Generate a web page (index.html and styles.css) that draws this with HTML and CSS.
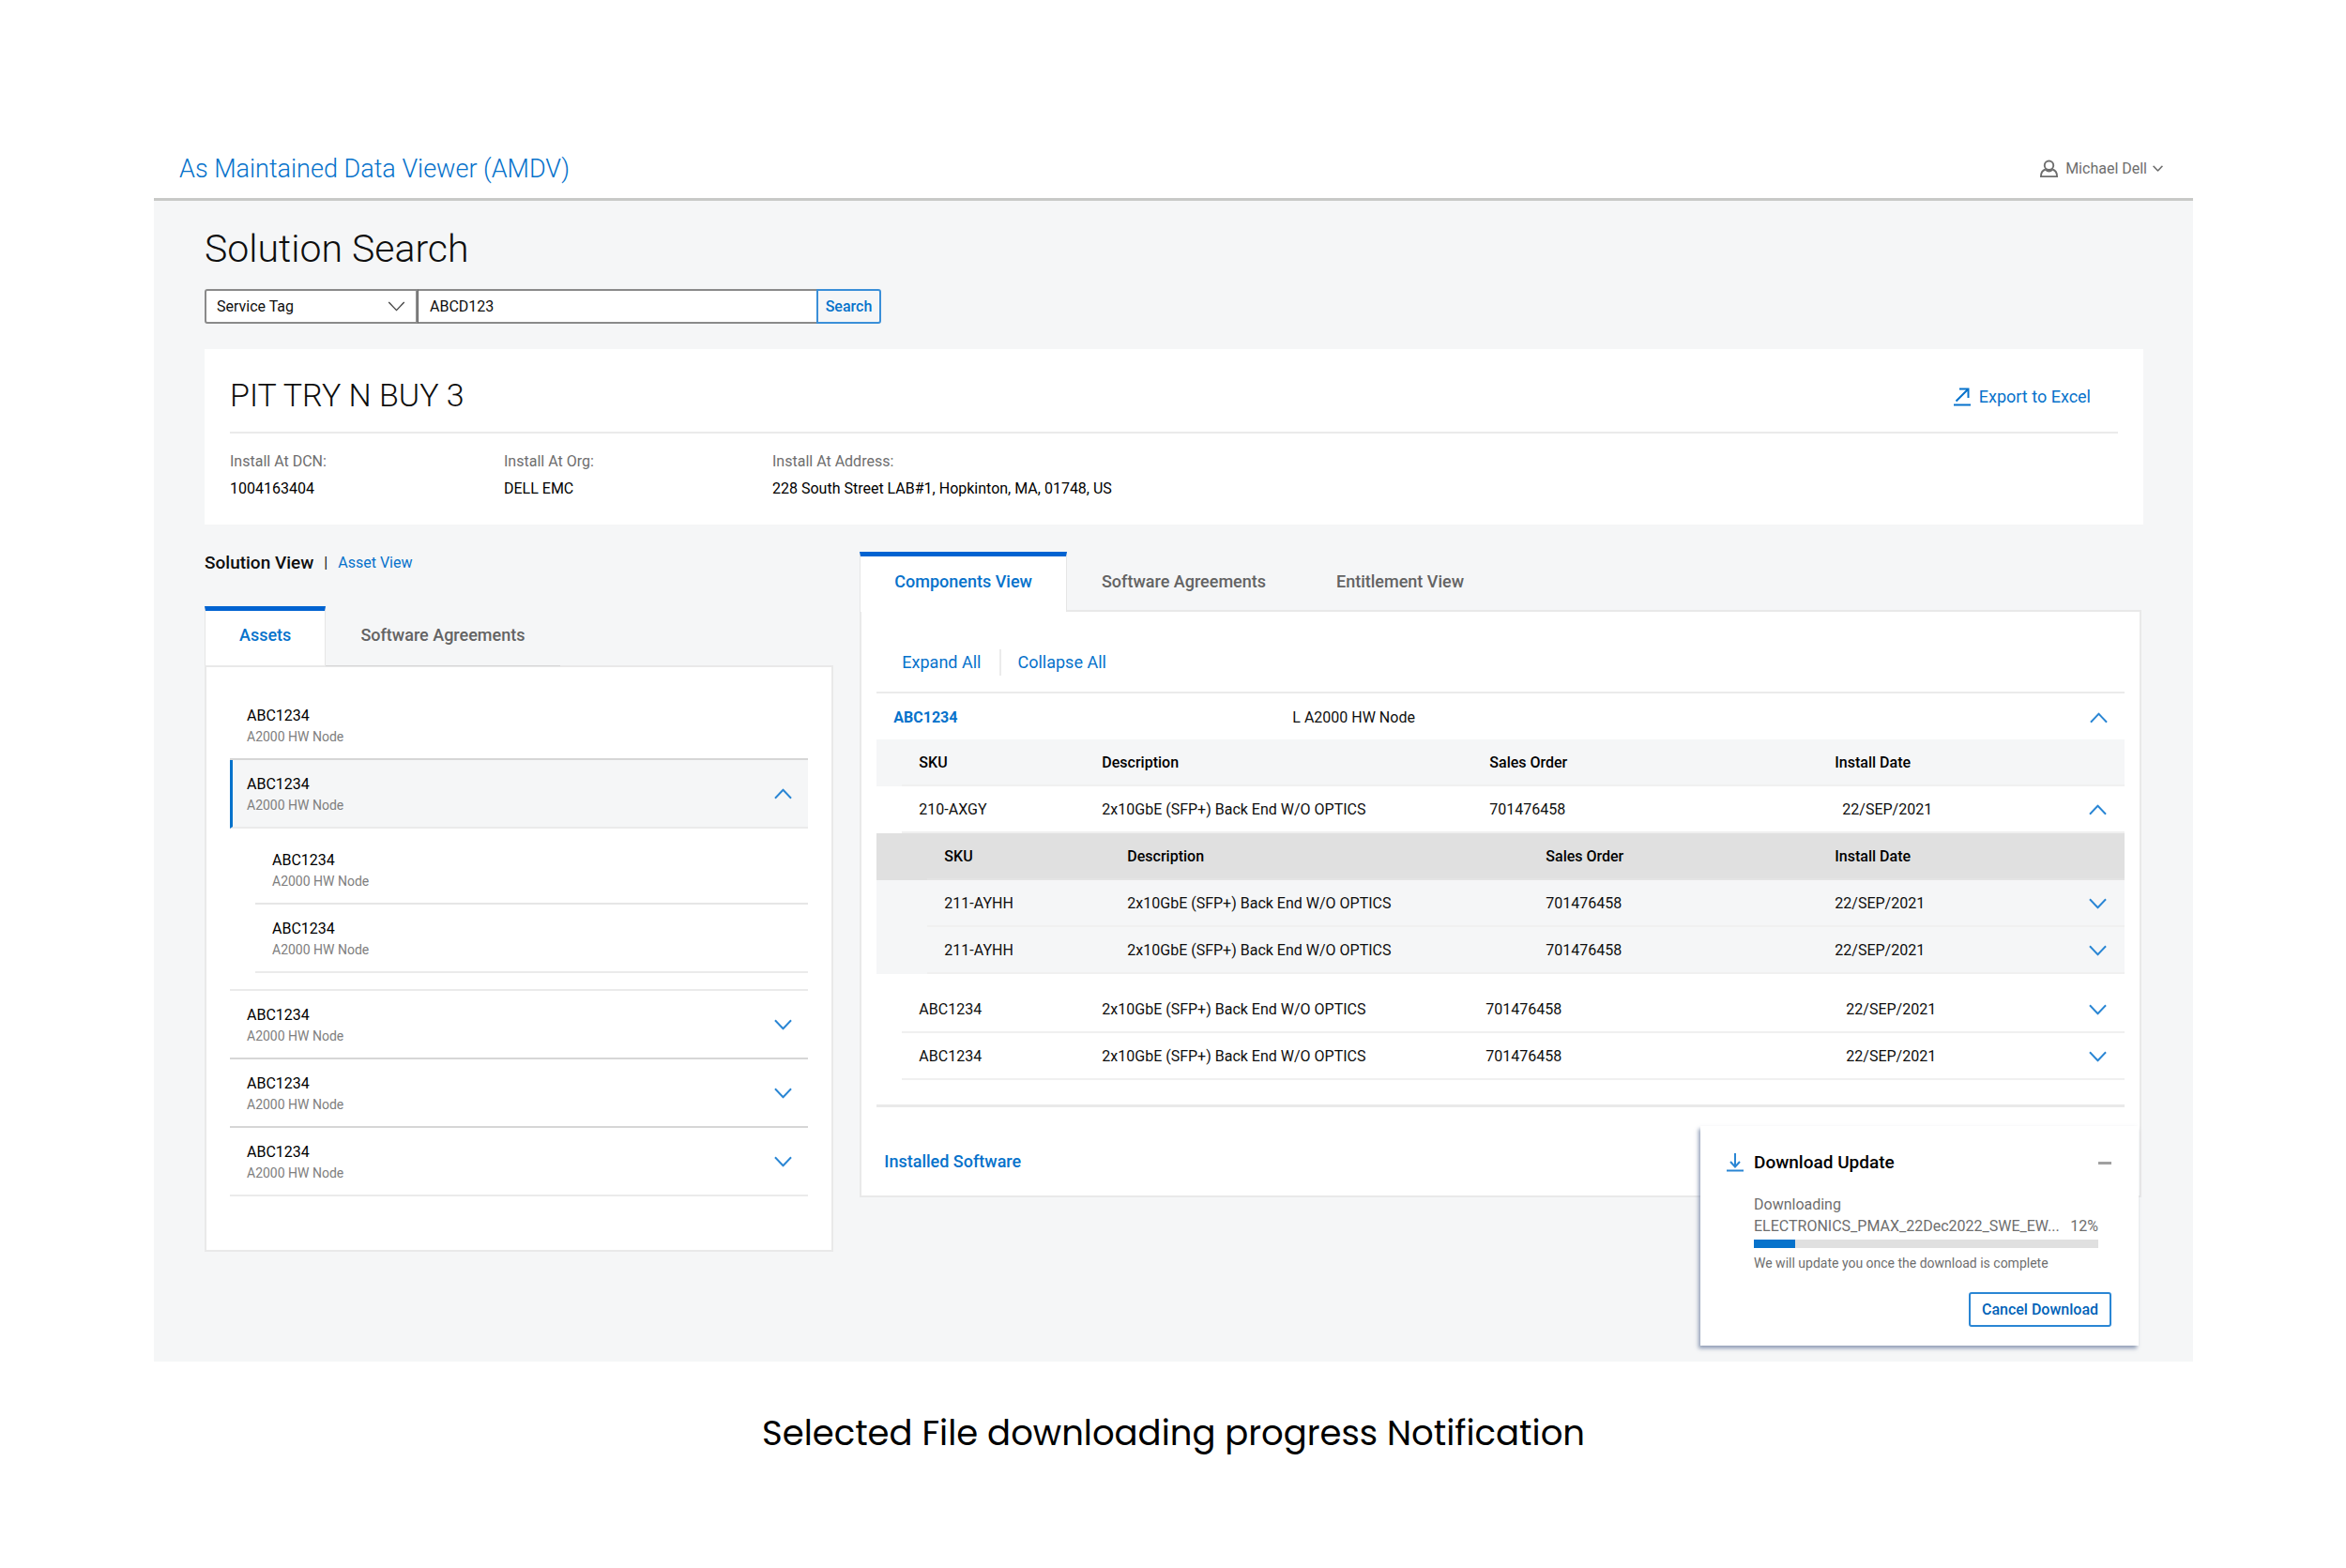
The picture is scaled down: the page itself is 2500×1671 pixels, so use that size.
FILE: index.html
```html
<!DOCTYPE html>
<html lang="en">
<head>
    <meta charset="UTF-8">
    <meta name="viewport" content="width=device-width, initial-scale=1.0">
    <title>As Maintained Data Viewer (AMDV)</title>
    <link rel="stylesheet" href="styles.css">
</head>
<body>
    <!-- Shared icons -->
    <svg class="icon-defs" aria-hidden="true">
        <symbol id="icon-down" viewBox="0 0 20 12"><path d="M1 1l9 9.5L19 1"/></symbol>
        <symbol id="icon-up" viewBox="0 0 20 12"><path d="M1 11l9-9.5L19 11"/></symbol>
    </svg>

    <div class="app">
        <header class="topbar">
            <a class="brand" href="#">As Maintained Data Viewer (AMDV)</a>
            <button class="user-menu" type="button">
                <svg class="icon-user" viewBox="0 0 20 20" aria-hidden="true">
                    <circle cx="10" cy="6" r="5"/>
                    <path d="M6 10.5C3 11.5 1 14.5 1 18.5h18c0-4-2-7-5-8M6 10.5c2.5 2.5 5.5 2.500 8 0"/>
                </svg>
                Michael Dell
                <svg class="icon-caret" viewBox="0 0 20 12" aria-hidden="true"><use href="#icon-down"/></svg>
            </button>
        </header>

        <main class="content">
            <h1>Solution Search</h1>
            <form class="search">
                <div class="search-type">
                    <select aria-label="Search by">
                        <option>Service Tag</option>
                    </select>
                    <svg class="select-arrow" viewBox="0 0 20 12" aria-hidden="true"><use href="#icon-down"/></svg>
                </div>
                <input class="search-text" type="text" value="ABCD123" aria-label="Search text">
                <button class="search-button" type="button">Search</button>
            </form>

            <section class="summary">
                <div class="summary-head">
                    <h2>PIT TRY N BUY 3</h2>
                    <a class="export" href="#">
                        <svg viewBox="0 0 18 20" aria-hidden="true"><path d="M2.500 14.500L15.500 1.500M6 1.500h9.500V11M0 18.500h18"/></svg>
                        Export to Excel
                    </a>
                </div>
                <dl class="summary-details">
                    <div><dt>Install At DCN:</dt><dd>1004163404</dd></div>
                    <div><dt>Install At Org:</dt><dd>DELL EMC</dd></div>
                    <div><dt>Install At Address:</dt><dd>228 South Street LAB#1, Hopkinton, MA, 01748, US</dd></div>
                </dl>
            </section>

            <div class="columns">
                <section>
                    <div class="view-switch">
                        <strong>Solution View</strong>
                        <span>|</span>
                        <a href="#">Asset View</a>
                    </div>
                    <div class="tabs">
                        <button class="tab active" type="button">Assets</button>
                        <button class="tab underlined" type="button">Software Agreements</button>
                    </div>
                    <div class="panel asset-panel">
                        <div class="asset">
                            <div class="asset-text"><b>ABC1234</b><small>A2000 HW Node</small></div>
                        </div>
                        <div class="asset selected">
                            <div class="asset-text"><b>ABC1234</b><small>A2000 HW Node</small></div>
                            <button class="toggle" type="button" aria-label="Collapse"><svg viewBox="0 0 20 12"><use href="#icon-up"/></svg></button>
                        </div>
                        <div class="asset-children">
                            <div class="asset">
                                <div class="asset-text"><b>ABC1234</b><small>A2000 HW Node</small></div>
                            </div>
                            <div class="asset">
                                <div class="asset-text"><b>ABC1234</b><small>A2000 HW Node</small></div>
                            </div>
                        </div>
                        <div class="asset">
                            <div class="asset-text"><b>ABC1234</b><small>A2000 HW Node</small></div>
                            <button class="toggle" type="button" aria-label="Expand"><svg viewBox="0 0 20 12"><use href="#icon-down"/></svg></button>
                        </div>
                        <div class="asset">
                            <div class="asset-text"><b>ABC1234</b><small>A2000 HW Node</small></div>
                            <button class="toggle" type="button" aria-label="Expand"><svg viewBox="0 0 20 12"><use href="#icon-down"/></svg></button>
                        </div>
                        <div class="asset">
                            <div class="asset-text"><b>ABC1234</b><small>A2000 HW Node</small></div>
                            <button class="toggle" type="button" aria-label="Expand"><svg viewBox="0 0 20 12"><use href="#icon-down"/></svg></button>
                        </div>
                    </div>
                </section>

                <section>
                    <div class="tabs joined">
                        <button class="tab active" type="button">Components View</button>
                        <button class="tab" type="button">Software Agreements</button>
                        <button class="tab" type="button">Entitlement View</button>
                    </div>
                    <div class="panel component-panel">
                        <div class="expand-links">
                            <a href="#">Expand All</a>
                            <a href="#">Collapse All</a>
                        </div>
                        <div class="component-head">
                            <a href="#">ABC1234</a>
                            <span>L A2000 HW Node</span>
                            <button class="toggle" type="button" aria-label="Collapse"><svg viewBox="0 0 20 12"><use href="#icon-up"/></svg></button>
                        </div>

                        <table class="parts">
                            <colgroup><col class="gutter"><col class="sku"><col class="description"><col class="order"><col><col class="action"></colgroup>
                            <thead>
                                <tr><td></td><th>SKU</th><th>Description</th><th>Sales Order</th><th>Install Date</th><td></td></tr>
                            </thead>
                            <tbody>
                                <tr>
                                    <td></td><td>210-AXGY</td><td>2x10GbE (SFP+) Back End W/O OPTICS</td><td>701476458</td><td class="date">22/SEP/2021</td>
                                    <td><button class="toggle" type="button" aria-label="Collapse"><svg viewBox="0 0 20 12"><use href="#icon-up"/></svg></button></td>
                                </tr>
                            </tbody>
                        </table>

                        <table class="parts nested">
                            <colgroup><col class="gutter"><col class="sku"><col class="description"><col class="order"><col><col class="action"></colgroup>
                            <thead>
                                <tr><td></td><th>SKU</th><th>Description</th><th>Sales Order</th><th>Install Date</th><td></td></tr>
                            </thead>
                            <tbody>
                                <tr>
                                    <td></td><td>211-AYHH</td><td>2x10GbE (SFP+) Back End W/O OPTICS</td><td>701476458</td><td>22/SEP/2021</td>
                                    <td><button class="toggle" type="button" aria-label="Expand"><svg viewBox="0 0 20 12"><use href="#icon-down"/></svg></button></td>
                                </tr>
                                <tr>
                                    <td></td><td>211-AYHH</td><td>2x10GbE (SFP+) Back End W/O OPTICS</td><td>701476458</td><td>22/SEP/2021</td>
                                    <td><button class="toggle" type="button" aria-label="Expand"><svg viewBox="0 0 20 12"><use href="#icon-down"/></svg></button></td>
                                </tr>
                            </tbody>
                        </table>

                        <table class="parts more">
                            <colgroup><col class="gutter"><col class="sku"><col class="description"><col class="order"><col><col class="action"></colgroup>
                            <tbody>
                                <tr>
                                    <td></td><td>ABC1234</td><td>2x10GbE (SFP+) Back End W/O OPTICS</td><td>701476458</td><td>22/SEP/2021</td>
                                    <td><button class="toggle" type="button" aria-label="Expand"><svg viewBox="0 0 20 12"><use href="#icon-down"/></svg></button></td>
                                </tr>
                                <tr>
                                    <td></td><td>ABC1234</td><td>2x10GbE (SFP+) Back End W/O OPTICS</td><td>701476458</td><td>22/SEP/2021</td>
                                    <td><button class="toggle" type="button" aria-label="Expand"><svg viewBox="0 0 20 12"><use href="#icon-down"/></svg></button></td>
                                </tr>
                            </tbody>
                        </table>

                        <div class="installed">
                            <a href="#">Installed Software</a>
                        </div>
                    </div>
                </section>
            </div>

            <aside class="download">
                <div class="download-head">
                    <svg class="icon-download" viewBox="0 0 18 20" aria-hidden="true"><path d="M9 0v14M4 9l5 5.500L14 9M0 18.500h18"/></svg>
                    <h3>Download Update</h3>
                    <button class="minimize" type="button" aria-label="Minimize"></button>
                </div>
                <div class="download-body">
                    <div>Downloading</div>
                    <div class="download-file">
                        <label for="download-progress">ELECTRONICS_PMAX_22Dec2022_SWE_EW...</label>
                        <span>12%</span>
                    </div>
                    <progress id="download-progress" value="12" max="100"></progress>
                    <p>We will update you once the download is complete</p>
                </div>
                <button class="cancel" type="button">Cancel Download</button>
            </aside>
        </main>
    </div>

    <p class="caption">Selected File downloading progress Notification</p>
</body>
</html>
```

FILE: styles.css
```css
* {
    box-sizing: border-box;
}
body {
    margin: 0;
    padding: 148px 163px 0 164px;
    background: #fff;
    color: #0e0e0e;
    font-family: Roboto, sans-serif;
    font-size: 16px;
    line-height: 24px;
}
h1, h2, h3, p, dl, dd {
    margin: 0;
}
a {
    color: #0672cb;
    text-decoration: none;
}
button, input, select {
    font: inherit;
    color: inherit;
    margin: 0;
}
button {
    padding: 0;
    border: 0;
    background: none;
    cursor: pointer;
}
svg {
    display: block;
    fill: none;
    stroke: currentColor;
    stroke-width: 2;
}
.icon-defs {
    position: absolute;
    width: 0;
    height: 0;
}

/* Top bar */
.topbar {
    display: flex;
    align-items: center;
    justify-content: space-between;
    height: 66px;
    padding: 0 32px 0 27px;
    border-bottom: 3px solid #c8c9c7;
}
.brand {
    font-size: 27px;
    font-weight: 300;
    line-height: 36px;
}
.user-menu {
    display: flex;
    align-items: center;
    color: #6e6e6e;
}
.icon-user {
    width: 19px;
    height: 20px;
    margin-right: 8px;
}
.icon-caret {
    width: 11px;
    height: 7px;
    margin-left: 6px;
    stroke-width: 3;
}

/* Page content */
.content {
    position: relative;
    padding: 27px 53px 117px 54px;
    background: #f5f6f7;
}
h1 {
    font-size: 41px;
    font-weight: 300;
    line-height: 48px;
}
.search {
    display: flex;
    height: 37px;
    margin-top: 19px;
}
.search-type {
    position: relative;
    width: 227px;
}
.search-type select {
    width: 100%;
    height: 100%;
    padding: 0 11px;
    border: 2px solid #8a8a8a;
    border-radius: 3px 0 0 3px;
    background: #fff;
    appearance: none;
}
.select-arrow {
    position: absolute;
    top: 13px;
    right: 13px;
    width: 19px;
    height: 11px;
    color: #444;
    stroke-width: 1.5;
    pointer-events: none;
}
.search-text {
    width: 425px;
    padding: 0 12px;
    border: 2px solid #8a8a8a;
    border-left: 1px solid #636363;
    border-right: 0;
    background: #fff;
}
.search-button {
    width: 69px;
    border: 2px solid #3a8fd8;
    border-radius: 0 3px 3px 0;
    color: #0672cb;
    font-weight: 500;
}

/* Solution summary */
.summary {
    margin-top: 27px;
    padding: 29px 27px 26px;
    background: #fff;
}
.summary-head {
    display: flex;
    align-items: center;
    justify-content: space-between;
    padding: 0 29px 19px 0;
    border-bottom: 2px solid #ebebeb;
}
h2 {
    font-size: 34px;
    font-weight: 300;
    line-height: 40px;
}
.export {
    display: flex;
    align-items: center;
    gap: 9px;
    padding-top: 4px;
    font-size: 18px;
}
.export svg {
    width: 18px;
    height: 20px;
}
.summary-details {
    display: flex;
    margin-top: 18px;
}
.summary-details div {
    min-width: 292px;
}
.summary-details div:nth-child(2) {
    min-width: 286px;
}
.summary-details dt {
    margin-bottom: 5px;
    color: #6e6e6e;
}
.summary-details dd {
    color: #000;
}

/* Two columns with tabs */
.columns {
    display: grid;
    grid-template-columns: 670fr 1365fr;
    gap: 28px;
    align-items: start;
    margin-top: 29px;
    padding-right: 2px;
}
.view-switch {
    display: flex;
    gap: 11px;
    margin-bottom: 34px;
}
.view-switch strong {
    font-size: 19px;
    font-weight: 500;
}
.tabs {
    display: flex;
}
.tab {
    height: 63px;
    padding: 0 38px 6px 37px;
    border-top: 5px solid transparent;
    color: #636363;
    font-size: 18px;
    font-weight: 500;
    line-height: 24px;
}
.tab.active {
    padding: 0 36px 6px;
    border-top-color: #0063d1;
    border-left: 1px solid #e6e6e6;
    border-right: 1px solid #e6e6e6;
    background: #fff;
    color: #0672cb;
}
.tab.underlined {
    box-shadow: 0 1px 0 #d6d6d6;
}
.joined .tab {
    height: 62px;
    padding-bottom: 4px;
}
/* the active tab runs into the panel below it */
.joined .tab.active {
    position: relative;
    height: 64px;
    margin-bottom: -2px;
    padding-bottom: 6px;
}
.panel {
    border: 2px solid #e9e9e9;
    background: #fff;
}

/* Asset list */
.asset-panel {
    padding: 26px 25px 57px;
}
.asset {
    display: flex;
    align-items: center;
    justify-content: space-between;
    padding: 14px 17px 13px 18px;
    border-bottom: 2px solid #d6d6d6;
}
.asset-text b,
.asset-text small {
    display: block;
}
.asset-text b {
    font-weight: 400;
    color: #000;
}
.asset-text small {
    color: #7e7e7e;
    font-size: 14px;
    line-height: 20px;
}
.asset.selected {
    padding-left: 15px;
    border-left: 3px solid #0672cb;
    border-bottom-color: #ebebeb;
    background: #f5f6f7;
}
.asset-children {
    padding: 8px 0 17px 27px;
    border-bottom: 2px solid #ebebeb;
}
.asset-children .asset {
    border-bottom-color: #e6e6e6;
}
.asset:last-child {
    border-bottom-color: #ebebeb;
}
.toggle {
    display: block;
    color: #2a86d4;
}
.toggle svg {
    width: 19px;
    height: 12px;
}

/* Components */
.component-panel {
    padding: 40px 16px 24px;
}
.expand-links {
    display: flex;
    margin: 0 27px 17px;
    font-size: 18px;
    line-height: 28px;
}
.expand-links a + a {
    margin-left: 20px;
    padding-left: 17px;
    border-left: 2px solid #ebebeb;
}
.component-head {
    display: flex;
    align-items: center;
    height: 51px;
    padding: 2px 18px 0;
    border-top: 2px solid #ebebeb;
}
.component-head a {
    width: 425px;
    font-weight: 700;
}
.component-head .toggle {
    margin-left: auto;
}
.parts {
    width: 100%;
    table-layout: fixed;
    border-collapse: separate;
    border-spacing: 0;
}
.parts .gutter {
    width: 27px;
}
.parts .sku {
    width: 195px;
}
.parts .description {
    width: 413px;
}
.parts .order {
    width: 368px;
}
.parts .action {
    width: 56px;
}
.parts th,
.parts td {
    height: 50px;
    padding: 2px 0 0 18px;
    border-bottom: 2px solid #f0f0f0;
    text-align: left;
}
.parts th {
    color: #000;
    font-weight: 500;
}
.parts td:first-child {
    padding: 0;
    border-bottom: 0;
}
.parts thead {
    background: #f5f6f7;
}
.parts .date {
    padding-left: 26px;
}
.nested {
    background: #f5f6f7;
}
.nested .gutter {
    width: 54px;
}
.nested .description {
    width: 446px;
}
.nested .order {
    width: 308px;
}
.nested thead {
    background: #e0e0e0;
}
.nested thead th,
.nested thead td {
    border-bottom-color: #e4e4e4;
}
.more {
    margin-top: 13px;
}
.more .description {
    width: 409px;
}
.more .order {
    width: 384px;
}
.installed {
    margin-top: 26px;
    padding: 46px 8px 0;
    border-top: 3px solid #e9e9e9;
    font-size: 18px;
    font-weight: 500;
}

/* Download notification */
.download {
    position: absolute;
    right: 58px;
    bottom: 17px;
    width: 467px;
    padding: 27px 29px 20px 28px;
    background: #fff;
    box-shadow: -2px 3px 4px rgba(80, 100, 140, 0.6);
}
.download-head {
    display: flex;
    align-items: center;
    margin-bottom: 21px;
}
.icon-download {
    width: 18px;
    height: 20px;
    margin-right: 11px;
    color: #2a86d4;
}
h3 {
    color: #000;
    font-size: 19px;
    font-weight: 500;
}
.minimize {
    width: 14px;
    height: 3px;
    margin-left: auto;
    background: #a0a0a0;
}
.download-body {
    margin: 0 14px 21px 29px;
    color: #6e6e6e;
    line-height: 23px;
}
.download-file {
    display: flex;
    justify-content: space-between;
}
progress {
    display: block;
    width: 100%;
    height: 9px;
    margin: 3px 0 6px;
    border: 0;
    appearance: none;
}
progress::-webkit-progress-bar {
    background: #e0e0e0;
}
progress::-webkit-progress-value {
    background: #0672cb;
}
.download-body p {
    font-size: 14px;
    line-height: 20px;
}
.cancel {
    display: block;
    width: 152px;
    height: 37px;
    margin-left: auto;
    border: 2px solid #2a86d4;
    border-radius: 3px;
    color: #0063b8;
    font-weight: 500;
}

.caption {
    margin-top: 50px;
    color: #000;
    font-family: Poppins, Inter, sans-serif;
    font-size: 37px;
    line-height: 52px;
    text-align: center;
}
```
